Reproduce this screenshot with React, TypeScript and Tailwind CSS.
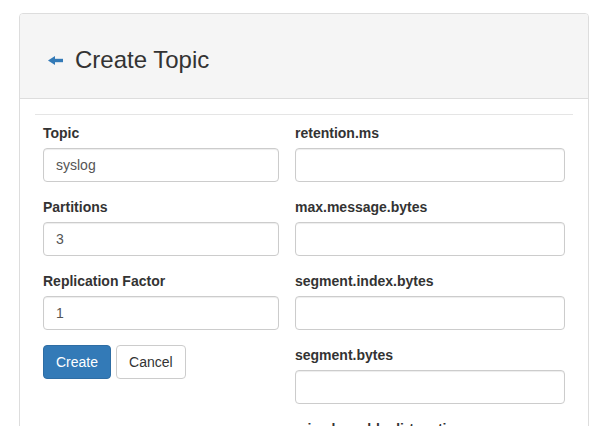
import React from "react";

const LEFT_FIELDS = [
  { label: "Topic", value: "syslog" },
  { label: "Partitions", value: "3" },
  { label: "Replication Factor", value: "1" },
];

const RIGHT_FIELDS = [
  "retention.ms",
  "max.message.bytes",
  "segment.index.bytes",
  "segment.bytes",
  "min.cleanable.dirty.ratio",
  "cleanup.policy",
];

function Field({ label, value = "" }: { label: string; value?: string }) {
  return (
    <div className="mb-[15px]">
      <label className="mb-[5px] block text-[14px] font-bold leading-[20px] text-[#333]">{label}</label>
      <input
        readOnly
        value={value}
        className="block h-[34px] w-full rounded-[4px] border border-[#ccc] bg-white px-[12px] py-[6px] text-[14px] leading-[20px] text-[#555] shadow-[inset_0_1px_1px_rgba(0,0,0,0.075)] outline-none"
      />
    </div>
  );
}

export default function App() {
  return (
    <div
      className="h-[426px] overflow-hidden bg-white pt-[13px] pl-[19px]"
      style={{ fontFamily: '"Liberation Sans", Arial, sans-serif' }}
    >
      <div className="w-[570px] rounded-[4px] border border-[#ddd] bg-white">
        {/* Heading */}
        <div className="flex items-center rounded-t-[3px] border-b border-[#ddd] bg-[#f5f5f5] pl-[28px] pt-[33px] pb-[25px]">
          <svg width="15" height="9" viewBox="0 0 15 9" className="mr-[12px] shrink-0">
            <polygon points="0,4.5 7,0 7,9" fill="#337ab7" />
            <rect x="6" y="2.8" width="9" height="3.4" fill="#337ab7" />
          </svg>
          <h3 className="text-[24px] font-normal leading-[26px] text-[#333]">Create Topic</h3>
        </div>

        {/* Body */}
        <div className="p-[15px]">
          <hr className="mb-[8px] border-t border-[#e5e5e5]" />
          <div className="flex">
            <div className="w-[252px] px-[8px]">
              {LEFT_FIELDS.map((f) => (
                <Field key={f.label} label={f.label} value={f.value} />
              ))}
              <div className="flex gap-[5px]">
                <button className="h-[34px] rounded-[4px] border border-[#2e6da4] bg-[#337ab7] px-[12px] text-[14px] text-white">
                  Create
                </button>
                <button className="h-[34px] rounded-[4px] border border-[#ccc] bg-white px-[12px] text-[14px] text-[#333]">
                  Cancel
                </button>
              </div>
            </div>
            <div className="w-[286px] px-[8px]">
              {RIGHT_FIELDS.map((name) => (
                <Field key={name} label={name} />
              ))}
            </div>
          </div>
        </div>
      </div>
    </div>
  );
}
